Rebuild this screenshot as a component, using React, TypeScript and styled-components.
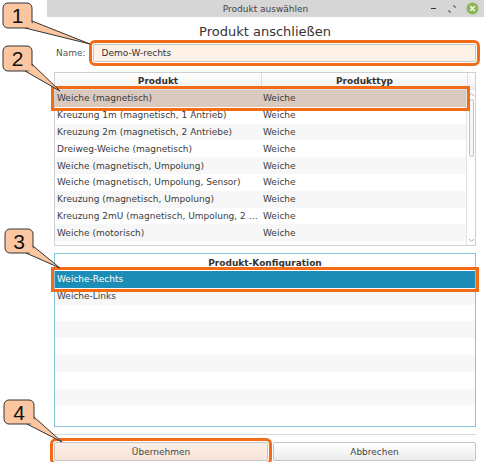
import React, { FC } from "react";
import styled, { createGlobalStyle, css } from "styled-components";

const GlobalStyle = createGlobalStyle`
  html, body {
    margin: 0;
    padding: 0;
    background: #ffffff;
  }
  body {
    font-family: "DejaVu Sans", "Noto Sans", sans-serif;
    color: #3c3c3c;
  }
`;

const products: [string, string][] = [
  ["Weiche (magnetisch)", "Weiche"],
  ["Kreuzung 1m (magnetisch, 1 Antrieb)", "Weiche"],
  ["Kreuzung 2m (magnetisch, 2 Antriebe)", "Weiche"],
  ["Dreiweg-Weiche (magnetisch)", "Weiche"],
  ["Weiche (magnetisch, Umpolung)", "Weiche"],
  ["Weiche (magnetisch, Umpolung, Sensor)", "Weiche"],
  ["Kreuzung (magnetisch, Umpolung)", "Weiche"],
  ["Kreuzung 2mU (magnetisch, Umpolung, 2 Antriebe)", "Weiche"],
  ["Weiche (motorisch)", "Weiche"],
];

const configs = ["Weiche-Rechts", "Weiche-Links", "", "", "", "", "", "", ""];

// orange annotation frame drawn around the highlighted parts
const marked = css`
  outline: 3px solid #f36b17;
  outline-offset: 1px;
  position: relative;
  z-index: 1;
`;

export default function App() {
  return (
    <Screen>
      <GlobalStyle />
      <Window>
        <TitleBar>
          <span />
          <Title>Produkt auswählen</Title>
          <Controls>
            <Minimize />
            <svg width="8" height="8" viewBox="0 0 8 8">
              <path d="M5 1h2v2M3 7H1V5" stroke="#555" strokeWidth="1" fill="none" />
            </svg>
            <svg width="13" height="13" viewBox="0 0 13 13">
              <circle cx="6.5" cy="6.5" r="6" fill="#8db756" />
              <path d="M4.3 4.3l4.4 4.4M8.7 4.3l-4.4 4.4" stroke="#fff" strokeWidth="1.4" />
            </svg>
          </Controls>
        </TitleBar>
        <Body>
          <Heading>Produkt anschließen</Heading>
          <NameRow>
            <Label>Name:</Label>
            <Input $marked>Demo-W-rechts</Input>
          </NameRow>
          <Table>
            <HeaderRow>
              <HeaderCell>Produkt</HeaderCell>
              <HeaderCell>Produkttyp</HeaderCell>
              <HeaderCell />
            </HeaderRow>
            <TableBody>
              <Rows>
                {products.map(([name, type], i) => (
                  <ProductRow key={name} $selected={i === 0} $striped={i % 2 === 0}>
                    <Cell>{name}</Cell>
                    <Cell>{type}</Cell>
                  </ProductRow>
                ))}
              </Rows>
              <ScrollBar>
                <Arrow>
                  <svg width="7" height="5" viewBox="0 0 7 5">
                    <path d="M1 4l2.5-2.5L6 4" stroke="#aaa" fill="none" />
                  </svg>
                </Arrow>
                <Thumb />
                <ScrollSpacer />
                <Arrow>
                  <svg width="7" height="5" viewBox="0 0 7 5">
                    <path d="M1 1l2.5 2.5L6 1" stroke="#aaa" fill="none" />
                  </svg>
                </Arrow>
              </ScrollBar>
            </TableBody>
          </Table>
          <ConfigPanel>
            <ConfigHeader>Produkt-Konfiguration</ConfigHeader>
            {configs.map((c, i) => (
              <ConfigRow key={i} $selected={i === 0} $striped={i % 2 === 1}>
                {c}
              </ConfigRow>
            ))}
          </ConfigPanel>
          <Separator />
          <ButtonRow>
            <Button $marked>Übernehmen</Button>
            <Button>Abbrechen</Button>
          </ButtonRow>
        </Body>
      </Window>
      <Callouts />
    </Screen>
  );
}

const callouts = [
  { n: "1", x: 3, y: 3, w: 29, h: 25, tip: [90, 44] },
  { n: "2", x: 3, y: 46, w: 29, h: 25, tip: [60, 91] },
  { n: "3", x: 5, y: 229, w: 28, h: 24, tip: [60, 268] },
  { n: "4", x: 4, y: 400, w: 30, h: 24, tip: [62, 442] },
];

const Callouts: FC = () => (
  <Overlay width="484" height="462" viewBox="0 0 484 462">
    {callouts.map(({ n, x, y, w, h, tip }) => {
      const tail = `${x + w - 7},${y + h} ${x + w},${y + h - 7} ${tip[0]},${tip[1]}`;
      return (
        <g key={n}>
          <polygon points={tail} fill="#fcc7a0" stroke="#333" strokeWidth="1" strokeLinejoin="round" />
          <rect x={x} y={y} width={w} height={h} rx="5" fill="#fcc7a0" stroke="#333" strokeWidth="1" />
          <polygon points={`${x + w - 6},${y + h - 1} ${x + w - 1},${y + h - 6} ${x + w + 6},${y + h + 2}`} fill="#fcc7a0" />
          <text
            x={x + w / 2}
            y={y + h / 2 + 7.5}
            textAnchor="middle"
            fontFamily="Liberation Sans, Arial, sans-serif"
            fontSize="21"
            fill="#111"
          >
            {n}
          </text>
        </g>
      );
    })}
  </Overlay>
);

const Screen = styled.div`
  position: relative;
  width: 484px;
  height: 462px;
  overflow: hidden;
  background: #ffffff;
`;

const Overlay = styled.svg`
  position: absolute;
  left: 0;
  top: 0;
  z-index: 5;
  pointer-events: none;
`;

const Window = styled.div`
  margin-left: 47px;
  width: 437px;
  height: 462px;
  display: flex;
  flex-direction: column;
`;

const TitleBar = styled.div`
  height: 17px;
  flex: none;
  background: #d6d6d6;
  display: grid;
  grid-template-columns: 1fr auto 1fr;
  align-items: center;
`;

const Title = styled.span`
  font-size: 9px;
  color: #444;
`;

const Controls = styled.div`
  display: flex;
  justify-content: flex-end;
  align-items: center;
  gap: 10px;
  padding-right: 5px;
`;

const Minimize = styled.span`
  width: 5px;
  height: 1px;
  background: #333;
  margin-right: 2px;
`;

const Body = styled.div`
  flex: 1;
  padding: 0 8px 0 7px;
  display: flex;
  flex-direction: column;
`;

const Heading = styled.div`
  height: 26px;
  margin-top: 1px;
  display: flex;
  align-items: center;
  justify-content: center;
  font-size: 13px;
  color: #333;
`;

const NameRow = styled.div`
  display: flex;
  align-items: center;
  gap: 7px;
  height: 18px;
  padding-left: 2px;
`;

const Label = styled.span`
  font-size: 9px;
  color: #555;
`;

const Input = styled.div<{ $marked?: boolean }>`
  flex: 1;
  height: 18px;
  box-sizing: border-box;
  border: 1px solid #c8c8c8;
  border-radius: 2px;
  background: ${(p) => (p.$marked ? "#fdf1e8" : "#ffffff")};
  font-size: 9px;
  color: #333;
  display: flex;
  align-items: center;
  padding-left: 8px;
  ${(p) => p.$marked && marked}
`;

const Table = styled.div`
  margin-top: 10px;
  height: 174px;
  box-sizing: border-box;
  border: 1px solid #d0d0d0;
  display: flex;
  flex-direction: column;
`;

const HeaderRow = styled.div`
  display: grid;
  grid-template-columns: 206px 1fr 8px;
  height: 16px;
  flex: none;
  background: linear-gradient(#ffffff, #f1f1f1);
  border-bottom: 1px solid #e0e0e0;
`;

const HeaderCell = styled.div`
  display: flex;
  align-items: center;
  justify-content: center;
  font-size: 9px;
  font-weight: bold;
  color: #333;
  & + & {
    border-left: 1px solid #dedede;
  }
`;

const TableBody = styled.div`
  flex: 1;
  display: flex;
  min-height: 0;
`;

const Rows = styled.div`
  flex: 1;
  display: flex;
  flex-direction: column;
`;

const ProductRow = styled.div<{ $selected?: boolean; $striped?: boolean }>`
  display: grid;
  grid-template-columns: 206px 1fr;
  height: 16.8px;
  flex: none;
  align-items: center;
  background: ${(p) => (p.$selected ? "#dac9be" : p.$striped ? "#f7f7f7" : "#ffffff")};
  ${(p) => p.$selected && marked}
`;

const Cell = styled.div`
  font-size: 9px;
  color: #3c3c3c;
  padding-left: 2px;
  white-space: nowrap;
  overflow: hidden;
  text-overflow: ellipsis;
`;

const ScrollBar = styled.div`
  width: 8px;
  border-left: 1px solid #e2e2e2;
  display: flex;
  flex-direction: column;
  align-items: center;
`;

const Arrow = styled.div`
  height: 9px;
  display: flex;
  align-items: center;
  justify-content: center;
`;

const Thumb = styled.div`
  width: 5px;
  height: 58px;
  box-sizing: border-box;
  border: 1px solid #bdbdbd;
  border-radius: 3px;
  background: #f6f6f6;
`;

const ScrollSpacer = styled.div`
  flex: 1;
`;

const ConfigPanel = styled.div`
  margin-top: 7px;
  height: 174px;
  box-sizing: border-box;
  border: 1px solid #85c4dc;
  display: flex;
  flex-direction: column;
`;

const ConfigHeader = styled.div`
  height: 17px;
  flex: none;
  display: flex;
  align-items: center;
  justify-content: center;
  font-size: 9px;
  font-weight: bold;
  color: #333;
`;

const ConfigRow = styled.div<{ $selected?: boolean; $striped?: boolean }>`
  height: 16.8px;
  flex: none;
  display: flex;
  align-items: center;
  padding-left: 2px;
  font-size: 9px;
  color: ${(p) => (p.$selected ? "#ffffff" : "#3c3c3c")};
  background: ${(p) => (p.$selected ? "#1b8db6" : p.$striped ? "#f7f7f7" : "#ffffff")};
  ${(p) => p.$selected && marked}
`;

const Separator = styled.div`
  margin-top: 7px;
  height: 1px;
  background: #d8d8d8;
`;

const ButtonRow = styled.div`
  margin-top: 7px;
  display: grid;
  grid-template-columns: 214px 1fr;
  gap: 5px;
`;

const Button = styled.div<{ $marked?: boolean }>`
  height: 19px;
  box-sizing: border-box;
  border: 1px solid #c4c4c4;
  border-radius: 2px;
  background: ${(p) =>
    p.$marked ? "linear-gradient(#fdf0e8, #f7e4d8)" : "linear-gradient(#ffffff, #ececec)"};
  display: flex;
  align-items: center;
  justify-content: center;
  font-size: 9px;
  color: #444;
  ${(p) => p.$marked && marked}
`;
